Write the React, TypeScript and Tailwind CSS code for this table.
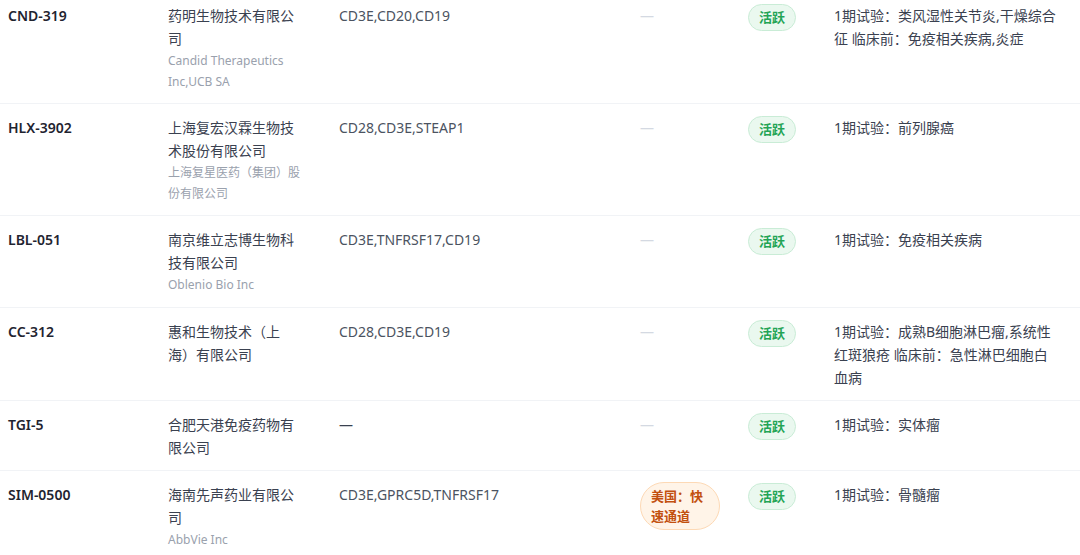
import React from "react";

type Row = {
  id: string;
  company: string;
  sub?: string;
  targets: string;
  special?: string;
  disease: string;
};

const rows: Row[] = [
  {
    id: "CND-319",
    company: "药明生物技术有限公司",
    sub: "Candid Therapeutics Inc,UCB SA",
    targets: "CD3E,CD20,CD19",
    disease: "1期试验：类风湿性关节炎,干燥综合征 临床前：免疫相关疾病,炎症",
  },
  {
    id: "HLX-3902",
    company: "上海复宏汉霖生物技术股份有限公司",
    sub: "上海复星医药（集团）股份有限公司",
    targets: "CD28,CD3E,STEAP1",
    disease: "1期试验：前列腺癌",
  },
  {
    id: "LBL-051",
    company: "南京维立志博生物科技有限公司",
    sub: "Oblenio Bio Inc",
    targets: "CD3E,TNFRSF17,CD19",
    disease: "1期试验：免疫相关疾病",
  },
  {
    id: "CC-312",
    company: "惠和生物技术（上海）有限公司",
    targets: "CD28,CD3E,CD19",
    disease: "1期试验：成熟B细胞淋巴瘤,系统性红斑狼疮 临床前：急性淋巴细胞白血病",
  },
  {
    id: "TGI-5",
    company: "合肥天港免疫药物有限公司",
    targets: "—",
    disease: "1期试验：实体瘤",
  },
  {
    id: "SIM-0500",
    company: "海南先声药业有限公司",
    sub: "AbbVie Inc",
    targets: "CD3E,GPRC5D,TNFRSF17",
    special: "美国：快速通道",
    disease: "1期试验：骨髓瘤",
  },
];

export default function App() {
  return (
    <div
      className="w-[1080px] h-[555px] overflow-hidden bg-white [text-spacing-trim:space-all]"
      style={{ fontFamily: '"Noto Sans", "Noto Sans CJK SC", sans-serif' }}
    >
      <div className="-mt-[8px]">
        {rows.map((r) => (
          <div key={r.id} className="flex border-b border-[#f1f3f6] pt-3 pb-[11px]">
            <div className="w-[160px] shrink-0 px-2 text-[14px] leading-[23px] font-semibold text-[#1f2430]">
              {r.id}
            </div>
            <div className="w-[171px] shrink-0 pl-2 pr-[27px]">
              <div className="text-[14px] leading-[23px] text-[#3a4150]">{r.company}</div>
              {r.sub && (
                <div className="mt-[1px] text-[12px] leading-[20.5px] text-[#9aa1ad]">{r.sub}</div>
              )}
            </div>
            <div
              className={
                "w-[301px] shrink-0 px-2 text-[14px] leading-[23px] " +
                (r.targets === "—" ? "text-[#3a4150]" : "text-[#4b5361]")
              }
            >
              {r.targets}
            </div>
            <div className="w-[108px] shrink-0 pl-2">
              {r.special ? (
                <div className="-mt-[1px] w-[80px] rounded-[24px] border border-[#fdd9b5] bg-[#fff4e8] px-[10px] py-[3px] text-[13px] leading-[20px] font-bold text-[#c2500f]">
                  {r.special}
                </div>
              ) : (
                <div className="text-[14px] leading-[23px] text-[#d4d9e2]">—</div>
              )}
            </div>
            <div className="w-[86px] shrink-0 pl-2">
              <div className="inline-flex h-[27px] items-center rounded-full border border-[#c9ecd6] bg-[#eaf8ef] px-[10px] text-[13px] font-bold text-[#23a455]">
                活跃
              </div>
            </div>
            <div className="w-[254px] shrink-0 pl-2 pr-[20px] text-[14px] leading-[23px] text-[#3a4150]">
              {r.disease}
            </div>
          </div>
        ))}
      </div>
    </div>
  );
}
